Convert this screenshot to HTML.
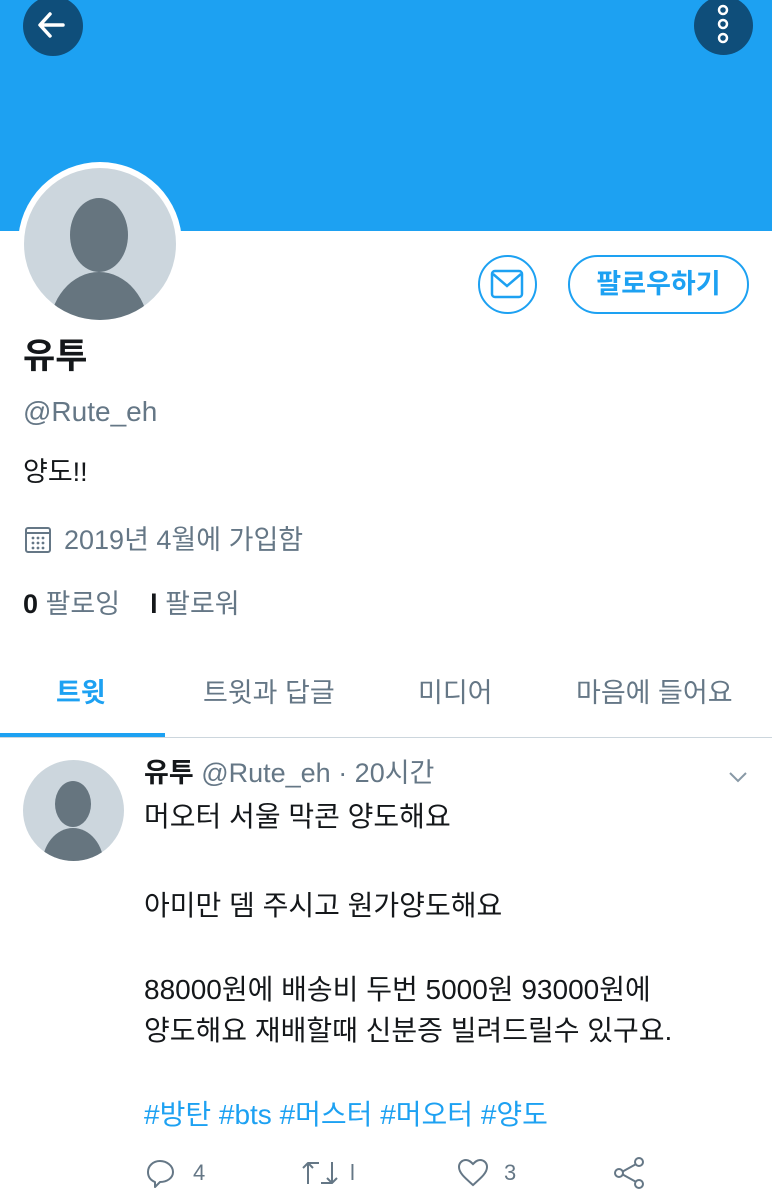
<!DOCTYPE html>
<html><head><meta charset="utf-8"><style>
*{margin:0;padding:0;box-sizing:border-box}
body{width:772px;height:1200px;overflow:hidden;background:#fff;position:relative;font-family:"Liberation Sans","Noto Sans CJK KR",sans-serif;color:#14171a}
.a{position:absolute;white-space:nowrap;line-height:1}
.g{color:#657786}
.b{color:#1da1f2}
</style></head><body>
<div class="a" style="left:0;top:0;width:772px;height:231px;background:#1da1f2"></div>
<div class="a" style="left:23px;top:-4px;width:60px;height:60px;border-radius:50%;background:#0f4e7a"></div>
<svg class="a" style="left:33px;top:6px" width="40" height="40" viewBox="0 0 40 40"><path d="M30 19H8M17 8L7 19l10 11" stroke="#fff" stroke-width="3.5" fill="none" stroke-linecap="round" stroke-linejoin="round"/></svg>
<div class="a" style="left:694px;top:-4px;width:59px;height:59px;border-radius:50%;background:#0f4e7a"></div>
<svg class="a" style="left:713px;top:0" width="20" height="50" viewBox="0 0 20 50"><circle cx="10" cy="10" r="4" stroke="#fff" stroke-width="2.5" fill="none"/><circle cx="10" cy="24" r="4" stroke="#fff" stroke-width="2.5" fill="none"/><circle cx="10" cy="38" r="4" stroke="#fff" stroke-width="2.5" fill="none"/></svg>
<svg class="a" style="left:18px;top:162px" width="164" height="164" viewBox="0 0 164 164"><circle cx="82" cy="82" r="82" fill="#fff"/><circle cx="82" cy="82" r="76" fill="#ccd6dd"/><clipPath id="c1"><circle cx="82" cy="82" r="76"/></clipPath><g clip-path="url(#c1)" fill="#66757f"><ellipse cx="81" cy="73" rx="29" ry="37"/><ellipse cx="81" cy="170" rx="50" ry="60"/></g></svg>
<div class="a" style="left:478px;top:255px;width:59px;height:59px;border-radius:50%;border:2px solid #1da1f2"></div>
<svg class="a" style="left:490px;top:268px" width="34" height="34" viewBox="0 0 34 34"><rect x="2" y="3" width="30" height="26" rx="3" stroke="#1da1f2" stroke-width="2.5" fill="none"/><path d="M3 6l14 12 14-12" stroke="#1da1f2" stroke-width="2.5" fill="none"/></svg>
<div class="a b" style="left:568px;top:255px;width:181px;height:59px;border-radius:30px;border:2px solid #1da1f2;font-size:27px;font-weight:bold;text-align:center;line-height:55px">팔로우하기</div>
<div class="a" style="left:23px;top:339px;font-size:35px;font-weight:bold">유투</div>
<div class="a g" style="left:23px;top:398px;font-size:28px">@Rute_eh</div>
<div class="a" style="left:23px;top:459px;font-size:27px">양도!!</div>
<svg class="a" style="left:24px;top:526px" width="28" height="28" viewBox="0 0 28 28"><rect x="2" y="2" width="24" height="24" rx="2" stroke="#657786" stroke-width="2" fill="none"/><path d="M2 7h24" stroke="#657786" stroke-width="2"/><g fill="#657786"><circle cx="9" cy="12" r="1.4"/><circle cx="14" cy="12" r="1.4"/><circle cx="19" cy="12" r="1.4"/><circle cx="9" cy="17" r="1.4"/><circle cx="14" cy="17" r="1.4"/><circle cx="19" cy="17" r="1.4"/><circle cx="9" cy="22" r="1.4"/><circle cx="14" cy="22" r="1.4"/><circle cx="19" cy="22" r="1.4"/></g></svg>
<div class="a g" style="left:64px;top:527px;font-size:27px">2019년 4월에 가입함</div>
<div class="a" style="left:23px;top:591px;font-size:27px"><b>0</b> <span class="g">팔로잉</span><span style="display:inline-block;width:30px"></span><b>l</b> <span class="g">팔로워</span></div>
<div class="a b" style="left:56px;top:680px;font-size:27px;font-weight:bold">트윗</div>
<div class="a g" style="left:203px;top:680px;font-size:27px">트윗과 답글</div>
<div class="a g" style="left:418px;top:680px;font-size:27px">미디어</div>
<div class="a g" style="left:576px;top:680px;font-size:27px">마음에 들어요</div>
<div class="a" style="left:0;top:733px;width:165px;height:4px;background:#1da1f2"></div>
<div class="a" style="left:0;top:737px;width:772px;height:1px;background:#ccd6dd"></div>
<svg class="a" style="left:23px;top:760px" width="101" height="101" viewBox="0 0 101 101"><clipPath id="c2"><circle cx="50.5" cy="50.5" r="50.5"/></clipPath><circle cx="50.5" cy="50.5" r="50.5" fill="#ccd6dd"/><g clip-path="url(#c2)" fill="#66757f"><ellipse cx="50" cy="44" rx="18" ry="23"/><ellipse cx="50" cy="106" rx="31" ry="38"/></g></svg>
<div class="a" style="left:144px;top:760px;font-size:27px"><b>유투</b> <span class="g">@Rute_eh · 20시간</span></div>
<svg class="a" style="left:728px;top:770px" width="20" height="14" viewBox="0 0 20 14"><path d="M2 3l8 8 8-8" stroke="#8899a6" stroke-width="2" fill="none"/></svg>
<div class="a" style="left:144px;top:803px;font-size:28px">머오터 서울 막콘 양도해요</div>
<div class="a" style="left:144px;top:892px;font-size:28px">아미만 뎀 주시고 원가양도해요</div>
<div class="a" style="left:144px;top:976px;font-size:28px">88000원에 배송비 두번 5000원 93000원에</div>
<div class="a" style="left:144px;top:1017px;font-size:28px">양도해요 재배할때 신분증 빌려드릴수 있구요.</div>
<div class="a b" style="left:144px;top:1101px;font-size:28px">#방탄 #bts #머스터 #머오터 #양도</div>
<svg class="a" style="left:146px;top:1158px" width="30" height="32" viewBox="0 0 30 32"><path d="M9 24C4 22 2 18 2 14 2 8 7 3 14 3s13 5 13 11-6 10-13 10l-5 5z" stroke="#657786" stroke-width="2" fill="none" stroke-linejoin="round"/></svg>
<div class="a g" style="left:193px;top:1162px;font-size:22px">4</div>
<svg class="a" style="left:300px;top:1158px" width="40" height="30" viewBox="0 0 40 30"><path d="M8 26V5M3 10l5-5 5 5M8 5h11M32 4v21M27 20l5 5 5-5M32 25H21" stroke="#657786" stroke-width="2" fill="none" stroke-linejoin="round"/></svg>
<div class="a g" style="left:350px;top:1162px;font-size:22px">l</div>
<svg class="a" style="left:457px;top:1158px" width="32" height="30" viewBox="0 0 32 30"><path d="M16 27C8 20 2 15 2 9c0-4 3-7 7-7 3 0 5 2 7 4 2-2 4-4 7-4 4 0 7 3 7 7 0 6-6 11-14 18z" stroke="#657786" stroke-width="2" fill="none"/></svg>
<div class="a g" style="left:504px;top:1162px;font-size:22px">3</div>
<svg class="a" style="left:612px;top:1156px" width="34" height="34" viewBox="0 0 34 34"><g stroke="#657786" stroke-width="2" fill="#fff"><path d="M8 17L26 7M8 17l18 10"/><circle cx="7" cy="17" r="4"/><circle cx="27" cy="6" r="4"/><circle cx="27" cy="28" r="4"/></g></svg>
</body></html>
